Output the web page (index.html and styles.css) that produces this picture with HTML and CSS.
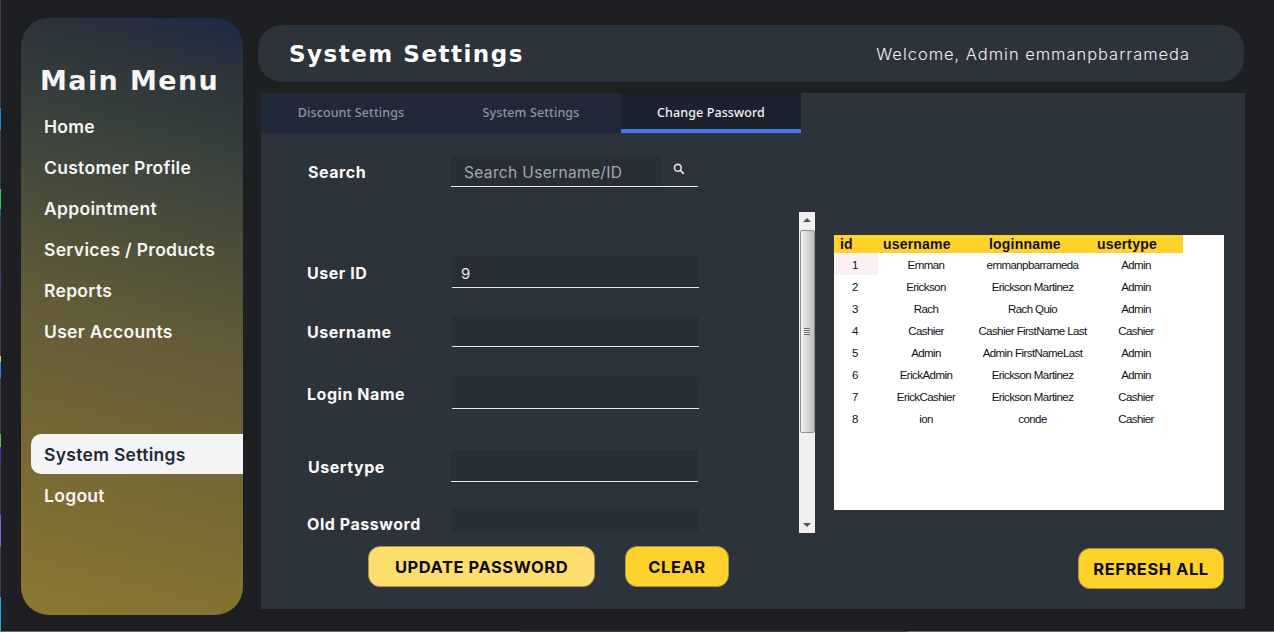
FILE: index.html
```html
<!DOCTYPE html>
<html>

<head>
    <meta charset="UTF-8">
    <title>System Settings</title>
    <link rel="stylesheet" href="styles.css">
</head>

<body>
    <!-- Bits of the window behind, visible at the screen edges -->
    <div class="edge-left"></div>
    <div class="edge-bottom"></div>

    <div class="app">
        <!-- Main menu -->
        <nav class="sidebar">
            <h2>Main Menu</h2>
            <a class="menu-item">Home</a>
            <a class="menu-item">Customer Profile</a>
            <a class="menu-item">Appointment</a>
            <a class="menu-item">Services / Products</a>
            <a class="menu-item">Reports</a>
            <a class="menu-item">User Accounts</a>
            <a class="menu-item active">System Settings</a>
            <a class="menu-item">Logout</a>
        </nav>

        <div class="main">
            <header class="topbar">
                <h1>System Settings</h1>
                <span class="welcome">Welcome, Admin emmanpbarrameda</span>
            </header>

            <section class="panel">
                <div class="tabs">
                    <div class="tab">Discount Settings</div>
                    <div class="tab">System Settings</div>
                    <div class="tab current">Change Password</div>
                </div>

                <div class="panel-body">
                    <div class="form-side">
                        <div class="search-row">
                            <label>Search</label>
                            <div class="field search-field">
                                <span class="search-text">Search Username/ID</span>
                                <svg class="search-icon" width="12" height="12" viewBox="0 0 12 12">
                                    <circle cx="4.8" cy="4.8" r="3.4" fill="none" stroke="#dfe1e3" stroke-width="1.6"/>
                                    <path d="M7.4 7.4 L10.8 10.8" stroke="#dfe1e3" stroke-width="1.9"/>
                                </svg>
                            </div>
                        </div>

                        <div class="form-row row-id">
                            <label>User ID</label>
                            <div class="field">9</div>
                        </div>
                        <div class="form-row row-username">
                            <label>Username</label>
                            <div class="field"></div>
                        </div>
                        <div class="form-row row-login">
                            <label>Login Name</label>
                            <div class="field"></div>
                        </div>
                        <div class="form-row row-type">
                            <label>Usertype</label>
                            <div class="field"></div>
                        </div>
                        <div class="form-row row-old">
                            <label>Old Password</label>
                            <div class="field"></div>
                        </div>
                    </div>

                    <!-- Form scrollbar -->
                    <div class="scrollbar">
                        <div class="arrow up"></div>
                        <div class="thumb"><span class="grip"></span></div>
                        <div class="arrow down"></div>
                    </div>

                    <div class="table-side">
                        <div class="grid">
                            <table>
                                <thead>
                                    <tr><th class="c-id">id</th><th class="c-user">username</th><th class="c-login">loginname</th><th class="c-type">usertype</th></tr>
                                </thead>
                                <tbody>
                                    <tr><td class="selected">1</td><td>Emman</td><td>emmanpbarrameda</td><td>Admin</td></tr>
                                    <tr><td>2</td><td>Erickson</td><td>Erickson Martinez</td><td>Admin</td></tr>
                                    <tr><td>3</td><td>Rach</td><td>Rach Quio</td><td>Admin</td></tr>
                                    <tr><td>4</td><td>Cashier</td><td>Cashier FirstName Last</td><td>Cashier</td></tr>
                                    <tr><td>5</td><td>Admin</td><td>Admin FirstNameLast</td><td>Admin</td></tr>
                                    <tr><td>6</td><td>ErickAdmin</td><td>Erickson Martinez</td><td>Admin</td></tr>
                                    <tr><td>7</td><td>ErickCashier</td><td>Erickson Martinez</td><td>Cashier</td></tr>
                                    <tr><td>8</td><td>ion</td><td>conde</td><td>Cashier</td></tr>
                                </tbody>
                            </table>
                        </div>
                    </div>
                </div>

                <div class="actions">
                    <button class="btn btn-update">UPDATE PASSWORD</button>
                    <button class="btn btn-clear">CLEAR</button>
                    <button class="btn btn-refresh">REFRESH ALL</button>
                </div>
            </section>
        </div>
    </div>
</body>

</html>
```

FILE: styles.css
```css
body {
    margin: 0;
    padding: 0;
    background-color: #1d1f23;
    font-family: "Inter", "Liberation Sans", sans-serif;
    color: #fff;
}

.edge-left {
    position: absolute;
    top: 0;
    left: 0;
    width: 1px;
    height: 632px;
    background: linear-gradient(#3a3d44 108px, #1f86e0 108px, #1f86e0 130px, #3a3d44 130px,
        #3a3d44 189px, #2fd36a 189px, #2fd36a 209px, #1c5fa8 209px, #1c5fa8 216px, #3a3d44 216px,
        #3a3d44 273px, #3f3580 273px, #3f3580 290px, #3a3d44 290px,
        #3a3d44 356px, #d8d83a 356px, #d8d83a 362px, #2a86e6 362px, #2a86e6 378px, #3a3d44 378px,
        #3a3d44 434px, #48d12f 434px, #48d12f 447px, #5a1fd0 447px, #5a1fd0 461px, #3a3d44 461px,
        #3a3d44 515px, #8a5ae0 515px, #8a5ae0 547px, #3a3d44 547px,
        #3a3d44 597px, #16aef0 597px);
}

.edge-bottom {
    position: absolute;
    left: 0;
    top: 631px;
    width: 1274px;
    height: 1px;
    background: linear-gradient(90deg, #6a6c70 520px, #3c3e42 520px, #3c3e42 908px, #6a6c70 908px);
}

.app {
    display: flex;
    width: 1274px;
    height: 632px;
    box-sizing: border-box;
    padding: 18px 0 0 21px;
    overflow: hidden;
}

/* Sidebar */
.sidebar {
    width: 222px;
    height: 597px;
    box-sizing: border-box;
    padding-top: 47px;
    border-radius: 28px;
    background: linear-gradient(15deg, #8c7830 0%, #615b38 50%, #3c443c 75%, #2c333b 91%, #1a2b47 100%);
    display: flex;
    flex-direction: column;
}

.sidebar h2 {
    margin: 0 0 9px 19px;
    font-family: "DejaVu Sans", sans-serif;
    font-size: 27px;
    line-height: 32px;
    font-weight: 700;
    letter-spacing: 1.4px;
    white-space: nowrap;
    color: #f5f5f5;
}

.menu-item {
    display: block;
    height: 41px;
    line-height: 41px;
    padding-left: 23px;
    font-size: 17.5px;
    font-weight: 600;
    letter-spacing: 0.3px;
    color: #f5f5f5;
}

.menu-item.active {
    height: 40px;
    line-height: 42px;
    margin: 82px 0 1px 10px;
    padding-left: 13px;
    background-color: #f5f5f5;
    color: #23293a;
    border-radius: 10px 0 0 10px;
}

/* Right side */
.main {
    width: 988px;
    margin-left: 14px;
}

.topbar {
    height: 57px;
    margin: 7px 1px 0 1px;
    padding: 0 54px 0 31px;
    display: flex;
    align-items: center;
    justify-content: space-between;
    background-color: #2c333b;
    border-radius: 24px;
}

.topbar h1 {
    margin: 0;
    font-family: "DejaVu Sans", sans-serif;
    font-size: 23px;
    font-weight: 700;
    letter-spacing: 1.5px;
}

.welcome {
    font-size: 16.5px;
    font-weight: 300;
    letter-spacing: 0.97px;
    color: #f0f0f0;
}

.panel {
    width: 984px;
    height: 516px;
    margin: 11px 0 0 4px;
    background-color: #2c333b;
}

.tabs {
    display: flex;
    width: 540px;
    height: 40px;
    background-color: #202938;
}

.tab {
    width: 180px;
    height: 40px;
    box-sizing: border-box;
    line-height: 40px;
    text-align: center;
    font-family: "Noto Sans", sans-serif;
    font-size: 12.5px;
    font-weight: 500;
    letter-spacing: 0.1px;
    color: #8f949b;
}

.tab.current {
    background-color: #1b212d;
    border-bottom: 4px solid #4478f0;
    color: #f2f2f2;
}

.panel-body {
    display: flex;
    height: 400px;
}

/* Form */
.form-side {
    width: 538px;
    height: 400px;
    overflow: hidden;
}

label {
    padding-top: 2px;
    font-size: 16px;
    font-weight: 700;
    letter-spacing: 0.55px;
    color: #fafafa;
}

.field {
    width: 247px;
    height: 32px;
    box-sizing: border-box;
    padding-left: 9px;
    line-height: 36px;
    background-color: #282e37;
    border-bottom: 1px solid #e4e6e8;
    font-size: 15px;
    color: #e8e8e8;
}

.search-row,
.form-row {
    display: flex;
    align-items: center;
}

.search-row {
    margin-top: 22px;
    padding-left: 47px;
}

.search-row label {
    width: 143px;
}

.search-field {
    display: flex;
    justify-content: space-between;
    padding-left: 0;
    background: linear-gradient(90deg, #282e37 210px, #2c333b 210px);
}

.search-text {
    padding-left: 13px;
    font-size: 15.5px;
    letter-spacing: 0.35px;
    color: #a4a8ad;
}

.search-icon {
    margin: 8px 13px 0 0;
}

.form-row {
    padding-left: 46px;
}

.form-row label {
    width: 145px;
}

.row-id {
    margin-top: 69px;
}

.row-username {
    margin-top: 27px;
}

.row-login {
    margin-top: 30px;
}

.row-type {
    margin-top: 41px;
    padding-left: 47px;
}

.row-type label {
    width: 143px;
}

.row-old {
    margin-top: 25px;
}

/* Scrollbar */
.scrollbar {
    width: 16px;
    height: 321px;
    margin-top: 79px;
    background-color: #f0f0f0;
    display: flex;
    flex-direction: column;
    align-items: center;
    position: relative;
}

.thumb {
    width: 15px;
    height: 203px;
    margin-top: 18px;
    box-sizing: border-box;
    border: 1px solid #8f8f8f;
    border-radius: 2px;
    background: linear-gradient(90deg, #f2f2f2, #d6d6d6 50%, #bdbdbd);
    display: flex;
    align-items: center;
    justify-content: center;
}

.grip {
    width: 6px;
    height: 5px;
    border-top: 1px solid #666;
    border-bottom: 1px solid #666;
    background: linear-gradient(#f0f0f0 1px, #666 1px, #666 2px, #f0f0f0 2px);
    background-size: 100% 2px;
}

.arrow {
    position: absolute;
    left: 4px;
    width: 0;
    height: 0;
    border-left: 4px solid transparent;
    border-right: 4px solid transparent;
}

.arrow.up {
    top: 6px;
    border-bottom: 4px solid #555;
}

.arrow.down {
    bottom: 6px;
    border-top: 4px solid #555;
}

/* Table */
.table-side {
    margin-left: 19px;
    padding-top: 102px;
}

.grid {
    width: 390px;
    height: 275px;
    background-color: #fff;
}

table {
    border-collapse: collapse;
    table-layout: fixed;
    width: 349px;
    font-family: "Liberation Sans", Arial, sans-serif;
    color: #111;
}

th {
    height: 17px;
    padding: 1px 0 0;
    background-color: #ffd22b;
    font-size: 14px;
    line-height: 17px;
    font-weight: 700;
    letter-spacing: 0.2px;
    text-align: left;
    white-space: nowrap;
    color: #111;
}

td {
    height: 21px;
    padding: 1px 2px 0 0;
    text-align: center;
    font-size: 11.5px;
    letter-spacing: -0.57px;
    white-space: nowrap;
}

td:nth-child(3),
td:nth-child(4) {
    padding-right: 4px;
}

.c-id {
    width: 44px;
    padding-left: 6px;
    box-sizing: border-box;
}

.c-user {
    width: 98px;
    padding-left: 5px;
    box-sizing: border-box;
}

.c-login {
    width: 117px;
    padding-left: 13px;
    box-sizing: border-box;
}

.c-type {
    width: 90px;
    padding-left: 4px;
    box-sizing: border-box;
}

td.selected {
    background-color: #fdf0f5;
}

/* Buttons */
.actions {
    display: flex;
    align-items: flex-start;
    height: 76px;
    padding-top: 13px;
    box-sizing: border-box;
}

.btn {
    height: 41px;
    padding: 1px 0 0;
    border: 1px solid #a8924a;
    border-radius: 12px;
    background-color: #ffd22b;
    font-family: "Inter", "Liberation Sans", sans-serif;
    font-size: 16.5px;
    font-weight: 700;
    letter-spacing: 0.55px;
    color: #0c0c0c;
    cursor: pointer;
}

.btn-update {
    width: 227px;
    margin-left: 107px;
    background-color: #ffde70;
}

.btn-clear {
    width: 104px;
    margin-left: 30px;
}

.btn-refresh {
    width: 146px;
    margin: 2px 0 0 349px;
}
```
